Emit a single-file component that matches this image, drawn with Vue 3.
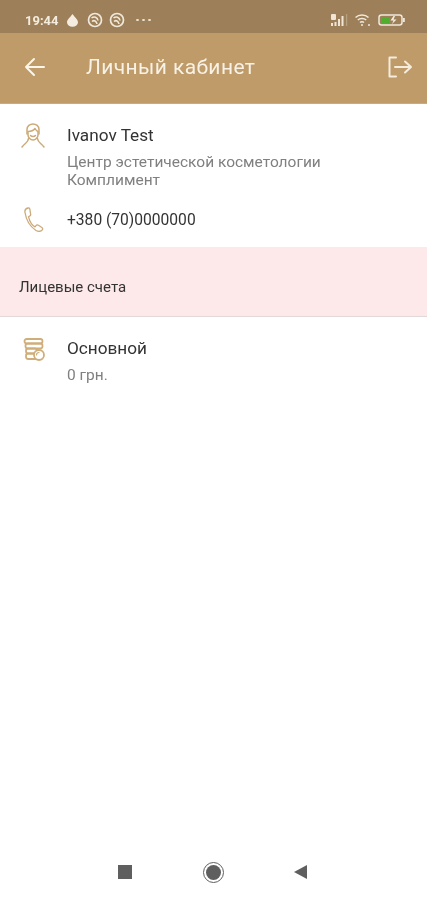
<script setup>
const statusIcons = [0, 1]
</script>

<template>
  <div class="page">
    <div class="status">
      <div class="status-left">
        <span class="time">19:44</span>
        <svg class="st-icon drop" width="13" height="14" viewBox="0 0 13 14"><path d="M6.500 1C8.500 4 12 6.500 12 9.200a5.500 4.500 0 0 1-11 0C1 6.500 4.500 4 6.500 1Z" fill="#f4ece0"/></svg>
        <svg v-for="i in statusIcons" :key="i" class="st-icon" width="16" height="16" viewBox="0 0 16 16" fill="none" stroke="#f0e8da"><circle cx="8" cy="8" r="6.500" stroke-width="1.700"/><path d="M4.500 6C7 4 10.500 5 11 8.500M5 9.500C7 7.800 9.500 8.800 10 12" stroke-width="1.600"/></svg>
        <span class="dots"><i></i><i></i><i></i></span>
      </div>
      <div class="status-right">
        <svg width="17" height="14" viewBox="0 0 17 14"><rect x="0" y="1" width="5" height="6" rx="1" fill="#efe6d6"/><rect x="0" y="10" width="2" height="3" fill="#efe6d6"/><rect x="3.500" y="9" width="2" height="4" fill="#efe6d6"/><rect x="7" y="6" width="2" height="7" fill="#efe6d6"/><rect x="10.500" y="3" width="2" height="10" fill="#efe6d6"/><rect x="15" y="1" width="1.200" height="12" fill="#b5a080"/></svg>
        <svg width="16" height="14" viewBox="0 0 16 14" fill="none" stroke="#f0e8da" stroke-width="1.500"><path d="M.5 4.500C4 1 10 1 13.500 4.500M2.800 7C5 5 9 5 11.200 7M5 9.500C6 8.600 8 8.600 9 9.500"/><circle cx="7" cy="12" r="1" fill="#f0e8da" stroke="none"/><circle cx="14" cy="12" r="1" fill="#f0e8da" stroke="none"/></svg>
        <svg width="28" height="14" viewBox="0 0 28 14" fill="none"><rect x="1" y="2" width="23" height="10" rx="2.500" stroke="#f0e8da" stroke-width="1.500"/><rect x="4" y="4" width="7" height="6" fill="#4fae2e"/><path d="M15.500 3 12.500 7.500h3L14 11 18.500 6.500h-3L17 3Z" fill="#f4ece0"/><rect x="25" y="5" width="1.800" height="4" fill="#f0e8da"/></svg>
      </div>
    </div>

    <header class="appbar">
      <div class="appbar-left">
        <svg class="back" width="22" height="20" viewBox="0 0 22 20" fill="none" stroke="#fbf5ea" stroke-width="2" stroke-linecap="round" stroke-linejoin="round"><path d="M2 10H20M10 2 2 10l8 8"/></svg>
        <h1>Личный кабинет</h1>
      </div>
      <svg width="26" height="22" viewBox="0 0 26 22" fill="none" stroke="#f5ecdd" stroke-width="2" stroke-linecap="round" stroke-linejoin="round"><path d="M9 1.500H2.500V20.500H9M8 11H24M18 5.500 24 11l-6 5.500"/></svg>
    </header>

    <section class="profile">
      <div class="row row-name">
        <svg class="icon" width="26" height="26" viewBox="0 0 26 26" fill="none" stroke="#cbaa78" stroke-width="1.500" stroke-linecap="round" stroke-linejoin="round">
          <path d="M7 11V6.500C7 3 10 1 13 1s6 2 6 5.500V11"/>
          <path d="M8 10V8.500C11 8.500 13.500 7.500 15 5.500c.8 1.500 1.800 2.500 3 3V12c0 2.500-2.500 5-5 5s-5-2.500-5-5Z"/>
          <path d="M10.500 12.500c1.200 1.300 3.800 1.300 5 0"/>
          <path d="M8.500 15.500C8.500 19 5 20 2 24M17.500 15.500C17.500 19 21 20 24 24"/>
        </svg>
        <div class="body">
          <div class="name">Ivanov Test</div>
          <div class="sub org">Центр эстетической косметологии<br>Комплимент</div>
        </div>
      </div>
      <div class="row row-phone">
        <svg class="icon" width="26" height="26" viewBox="0 0 26 26" fill="none" stroke="#cbaa78" stroke-width="1.300" stroke-linecap="round" stroke-linejoin="round">
          <path d="M8 1C6 1.500 4.500 3 5 5.500c1 6.500 5 14 11 18 2.500 1.300 5.500 1 6.500-1 .5-1-.2-1.800-1-2.300l-3-2c-1-.6-2-.3-2.700.6l-.8 1c-3-1.500-5.500-6.300-6.500-10l1.300-.8c1-.6 1-1.700.7-2.600L9.800 2C9.500 1.200 8.800.8 8 1Z"/>
        </svg>
        <div class="phone">+380 (70)0000000</div>
      </div>
    </section>

    <div class="band">Лицевые счета</div>

    <section class="account">
      <svg class="icon" width="26" height="26" viewBox="0 0 26 26" fill="none" stroke="#cfae7a" stroke-width="1.800" stroke-linecap="round" stroke-linejoin="round">
        <rect x="4.500" y="1" width="18" height="4.500" rx="2.200"/>
        <rect x="5.500" y="5.500" width="17" height="5" rx="2.200"/>
        <rect x="6" y="10.500" width="11" height="5" rx="2.200"/>
        <rect x="6" y="15.500" width="12" height="5.500" rx="2.200"/>
        <circle cx="19" cy="17" r="5" fill="#fff"/>
        <path d="M16.500 17a2.500 2.500 0 0 1 2.500-2.500" stroke-width="1.200"/>
      </svg>
      <div class="body">
        <div class="name">Основной</div>
        <div class="sub balance">0 грн.</div>
      </div>
    </section>

    <div class="spacer"></div>

    <nav class="navbar">
      <span class="nav-square"></span>
      <span class="nav-circle"><span></span></span>
      <span class="nav-back"></span>
    </nav>
  </div>
</template>

<style>
html, body { margin: 0; background: #fff; }
</style>

<style scoped>
.page {
  width: 427px;
  height: 900px;
  display: flex;
  flex-direction: column;
  overflow: hidden;
  background: #fff;
  font-family: Roboto, "Liberation Sans", sans-serif;
  color: #333;
  filter: blur(0.4px);
}
.status {
  height: 33px;
  flex: none;
  box-sizing: border-box;
  padding: 7px 21px 0 25px;
  background: #9d8059;
  display: flex;
  align-items: center;
  justify-content: space-between;
}
.status-left, .status-right { display: flex; align-items: center; }
.status-left { gap: 6px; }
.status-right { gap: 7px; }
.time { font-size: 13px; font-weight: 700; color: #f3ecdf; margin-right: 1px; }
.drop { margin-right: 2px; }
.dots { display: flex; gap: 3px; margin-left: 5px; }
.dots i { width: 3px; height: 2px; border-radius: 50%; background: #f0e8da; }
.appbar {
  height: 71px;
  flex: none;
  box-sizing: border-box;
  background: #be9b69;
  padding: 0 14px 3px 24px;
  display: flex;
  align-items: center;
  justify-content: space-between;
  border-bottom: 1px solid #c9ab7f;
}
.appbar-left { display: flex; align-items: center; gap: 40px; }
h1 {
  margin: 0;
  font-size: 21px;
  font-weight: 400;
  letter-spacing: 0.4px;
  color: #f8f1e5;
}
.profile { height: 143px; flex: none; box-sizing: border-box; padding-top: 21px; }
.row { display: flex; padding: 0 20px; }
.icon { flex: none; margin-right: 21px; }
.row-name .icon { margin-top: -2px; }
.row-phone { margin-top: 18px; align-items: center; }
.name { font-size: 17.200px; line-height: 20px; color: #333; }
.sub { font-size: 15.500px; color: #808080; }
.org { margin-top: 8px; line-height: 18px; }
.phone { font-size: 15.600px; color: #333; }
.band {
  height: 70px;
  flex: none;
  box-sizing: border-box;
  background: #fde9ea;
  border-bottom: 1px solid #e2d8d8;
  padding: 10px 0 0 19px;
  display: flex;
  align-items: center;
  font-size: 15px;
  color: #333;
}
.account { display: flex; padding: 21px 20px 0; }
.balance { margin-top: 8px; }
.spacer { flex: 1; }
.navbar {
  height: 60px;
  flex: none;
  box-sizing: border-box;
  padding: 4px 0 0 118px;
  display: flex;
  align-items: center;
}
.nav-square { width: 14px; height: 14px; background: #5f5f5f; }
.nav-circle {
  width: 21px;
  height: 21px;
  box-sizing: border-box;
  margin-left: 71px;
  padding: 2px;
  border: 1.500px solid #5f5f5f;
  border-radius: 50%;
  display: flex;
}
.nav-circle span { flex: 1; background: #5f5f5f; border-radius: 50%; }
.nav-back {
  width: 0;
  height: 0;
  margin-left: 70px;
  border-top: 7px solid transparent;
  border-bottom: 7px solid transparent;
  border-right: 13px solid #5f5f5f;
}
</style>
